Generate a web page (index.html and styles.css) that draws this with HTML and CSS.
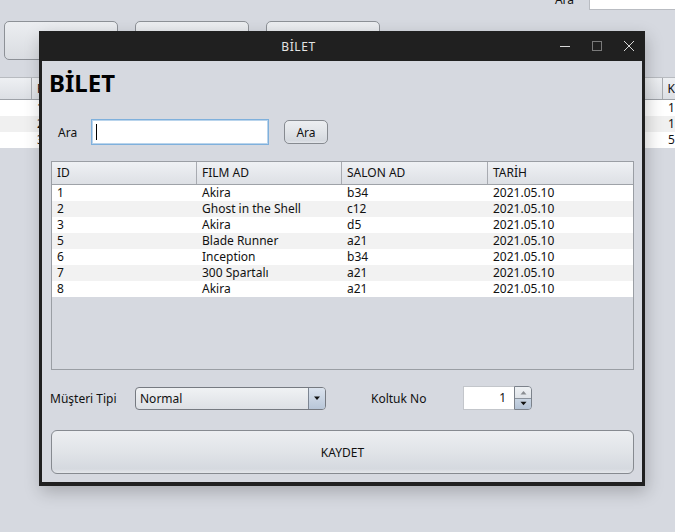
FILE: index.html
```html
<!DOCTYPE html>
<html>
<head>
<meta charset="utf-8">
<link rel="stylesheet" href="styles.css">
</head>
<body>
<div class="app">
  <div class="app-top">
    <span class="app-ara">Ara</span>
    <div class="app-field"></div>
  </div>
  <div class="app-buttons">
    <div class="app-btn"></div>
    <div class="app-btn"></div>
    <div class="app-btn"></div>
  </div>
  <div class="app-table">
    <div class="app-row app-head"><div class="c1"></div><div class="c2">F</div><div class="c3">K</div></div>
    <div class="app-row"><div class="c1"></div><div class="c2">1</div><div class="c3">1</div></div>
    <div class="app-row alt"><div class="c1"></div><div class="c2">2</div><div class="c3">1</div></div>
    <div class="app-row"><div class="c1"></div><div class="c2">3</div><div class="c3">5</div></div>
  </div>
</div>

<div class="window">
  <div class="titlebar">
    <div class="title">BİLET</div>
    <div class="ctl">
      <svg width="12" height="12" viewBox="0 0 12 12"><path d="M1 6.5h10" stroke="#d8d8d8" stroke-width="1"/></svg>
    </div>
    <div class="ctl">
      <svg width="12" height="12" viewBox="0 0 12 12"><rect x="1.5" y="1.5" width="9" height="9" fill="none" stroke="#7a7a7a" stroke-width="1"/></svg>
    </div>
    <div class="ctl">
      <svg width="12" height="12" viewBox="0 0 12 12"><path d="M1 1L11 11M11 1L1 11" stroke="#d8d8d8" stroke-width="1"/></svg>
    </div>
  </div>
  <div class="content">
    <h1 class="heading">BİLET</h1>
    <div class="search">
      <label class="lbl-ara">Ara</label>
      <div class="field"><span class="caret"></span></div>
      <button class="btn btn-ara">Ara</button>
    </div>
    <div class="table">
      <div class="thead">
        <div class="th">ID</div>
        <div class="th">FILM AD</div>
        <div class="th">SALON AD</div>
        <div class="th">TARİH</div>
      </div>
      <div class="tbody">
        <div class="tr"><div>1</div><div>Akira</div><div>b34</div><div>2021.05.10</div></div>
        <div class="tr"><div>2</div><div>Ghost in the Shell</div><div>c12</div><div>2021.05.10</div></div>
        <div class="tr"><div>3</div><div>Akira</div><div>d5</div><div>2021.05.10</div></div>
        <div class="tr"><div>5</div><div>Blade Runner</div><div>a21</div><div>2021.05.10</div></div>
        <div class="tr"><div>6</div><div>Inception</div><div>b34</div><div>2021.05.10</div></div>
        <div class="tr"><div>7</div><div>300 Spartalı</div><div>a21</div><div>2021.05.10</div></div>
        <div class="tr"><div>8</div><div>Akira</div><div>a21</div><div>2021.05.10</div></div>
      </div>
    </div>
    <div class="form-row">
      <label class="lbl-tip">Müşteri Tipi</label>
      <div class="combo">
        <span class="combo-text">Normal</span>
        <span class="combo-arrow"><svg width="8" height="6" viewBox="0 0 8 6"><path d="M1 1.5h6L4 5z" fill="#111"/></svg></span>
      </div>
      <label class="lbl-koltuk">Koltuk No</label>
      <div class="spinner">
        <div class="spin-field">1</div>
        <div class="spin-btns">
          <div class="spin-up"><svg width="7" height="5" viewBox="0 0 7 5"><path d="M0.5 4.5h6L3.5 1z" fill="#8a8d92"/></svg></div>
          <div class="spin-down"><svg width="7" height="5" viewBox="0 0 7 5"><path d="M0.5 0.8h6L3.5 4.3z" fill="#111"/></svg></div>
        </div>
      </div>
    </div>
    <button class="btn btn-kaydet">KAYDET</button>
  </div>
</div>
</body>
</html>
```

FILE: styles.css
```css
* { box-sizing: border-box; }
html, body {
  margin: 0;
  padding: 0;
  width: 675px;
  height: 532px;
  overflow: hidden;
  background: #d6d9e0;
  font-family: "Noto Sans", "Open Sans", sans-serif;
  font-size: 12px;
  color: #111;
}

/* background application */
.app { position: relative; width: 675px; }
.app-top {
  display: flex;
  justify-content: flex-end;
  align-items: center;
  margin-top: -12px;
  height: 22px;
}
.app-ara { margin-right: 15px; font-size: 12px; }
.app-field {
  width: 86px;
  height: 22px;
  background: #fff;
  border: 1px solid #b9bcc2;
  border-right: none;
}
.app-buttons {
  display: flex;
  gap: 17px;
  padding-left: 4px;
  margin-top: 11px;
}
.app-btn {
  width: 114px;
  height: 39px;
  border: 1px solid #8d9197;
  border-radius: 5px;
  background: linear-gradient(#eceef1, #d9dce1);
}
.app-table { margin-top: 17px; }
.app-row {
  display: flex;
  height: 16px;
  line-height: 16px;
  background: #fff;
}
.app-row.alt { background: #f0f0f0; }
.app-row.app-head {
  height: 23px;
  line-height: 22px;
  background: linear-gradient(#eef0f3, #dcdfe4);
  border-top: 1px solid #b8bbc0;
  border-bottom: 1px solid #9ea2a8;
}
.app-row .c1 { width: 32px; }
.app-row .c2 { width: 631px; padding-left: 5px; }
.app-row .c3 { padding-left: 5px; }
.app-head .c1, .app-head .c2 { border-right: 1px solid #a8abb0; }

/* dialog window */
.window {
  position: absolute;
  left: 39px;
  top: 31px;
  width: 606px;
  height: 455px;
  background: #202020;
  padding: 0 3px 4px 3px;
  box-shadow: 2px 6px 16px rgba(0, 0, 0, 0.22);
  display: flex;
  flex-direction: column;
}
.titlebar {
  height: 30px;
  display: flex;
  align-items: center;
  margin: 0 -3px;
}
.title {
  flex: 1;
  text-align: center;
  padding-left: 9px;
  color: #e4e4e4;
  font-size: 12px;
  letter-spacing: 0.6px;
}
.ctl {
  width: 32px;
  height: 30px;
  display: flex;
  align-items: center;
  justify-content: center;
}
.content {
  flex: 1;
  background: #d6d9e0;
  padding: 6px 8px 8px 9px;
  display: flex;
  flex-direction: column;
}
.heading {
  margin: 0 0 0 -2px;
  font-size: 24px;
  line-height: 32px;
  font-weight: bold;
  color: #000;
}
.search {
  display: flex;
  align-items: center;
  margin-top: 20px;
  height: 26px;
}
.lbl-ara { margin-left: 7px; width: 33px; }
.field {
  width: 178px;
  height: 26px;
  background: #fff;
  border: 1px solid #7fb0dc;
  box-shadow: inset 0 0 0 1px #b9d4ec;
  padding: 4px 4px;
  display: flex;
  align-items: center;
}
.caret { width: 1px; height: 16px; background: #000; }
.btn {
  font-family: "Noto Sans", "Open Sans", sans-serif;
  font-size: 12px;
  color: #111;
  border: 1px solid #868a90;
  background: linear-gradient(#eceef1 0%, #e2e5e9 45%, #d5d9df 90%, #e4e7eb 100%);
  padding: 0;
}
.btn-ara {
  margin-left: 15px;
  width: 44px;
  height: 24px;
  border-radius: 5px;
}

/* table */
.table {
  margin-top: 16px;
  height: 209px;
  border: 1px solid #9a9ea4;
  background: #d6d9e0;
}
.thead {
  display: grid;
  grid-template-columns: 145px 145px 146px 145px;
  height: 23px;
  border-bottom: 1px solid #9ea2a8;
  background: linear-gradient(#eff1f4, #dde0e5);
}
.th {
  line-height: 21px;
  padding-left: 5px;
  border-right: 1px solid #a8abb1;
}
.th:last-child { border-right: none; }
.tr {
  display: grid;
  grid-template-columns: 145px 145px 146px 145px;
  height: 16px;
  line-height: 16px;
  background: #fff;
}
.tr:nth-child(even) { background: #f2f2f2; }
.tr div { padding-left: 5px; white-space: nowrap; }

/* form row */
.form-row {
  display: flex;
  align-items: center;
  margin-top: 16px;
  height: 24px;
}
.lbl-tip { width: 85px; margin-left: -1px; }
.combo {
  width: 191px;
  height: 23px;
  border: 1px solid #767a81;
  border-radius: 4px;
  background: linear-gradient(#f0f2f4, #dde0e5);
  display: flex;
  overflow: hidden;
}
.combo-text { flex: 1; padding-left: 4px; line-height: 21px; }
.combo-arrow {
  width: 17px;
  border-left: 1px solid #7c8592;
  background: linear-gradient(#dbe3ee, #b8c6d8);
  display: flex;
  align-items: center;
  justify-content: center;
}
.lbl-koltuk { margin-left: 45px; width: 92px; }
.spinner { display: flex; height: 24px; }
.spin-field {
  width: 51px;
  height: 24px;
  background: #fff;
  border: 1px solid #c3c6cb;
  border-right: none;
  text-align: right;
  padding-right: 8px;
  line-height: 22px;
}
.spin-btns {
  width: 18px;
  border: 1px solid #7c828b;
  border-radius: 0 4px 4px 0;
  overflow: hidden;
  display: flex;
  flex-direction: column;
}
.spin-up, .spin-down {
  flex: 1;
  display: flex;
  align-items: center;
  justify-content: center;
}
.spin-up { background: linear-gradient(#eef1f4, #dfe3e8); border-bottom: 1px solid #8a929c; }
.spin-down { background: linear-gradient(#c9d5e3, #b4c3d6); }

.btn-kaydet {
  margin-top: 20px;
  width: 583px;
  height: 44px;
  border-radius: 6px;
}
```
